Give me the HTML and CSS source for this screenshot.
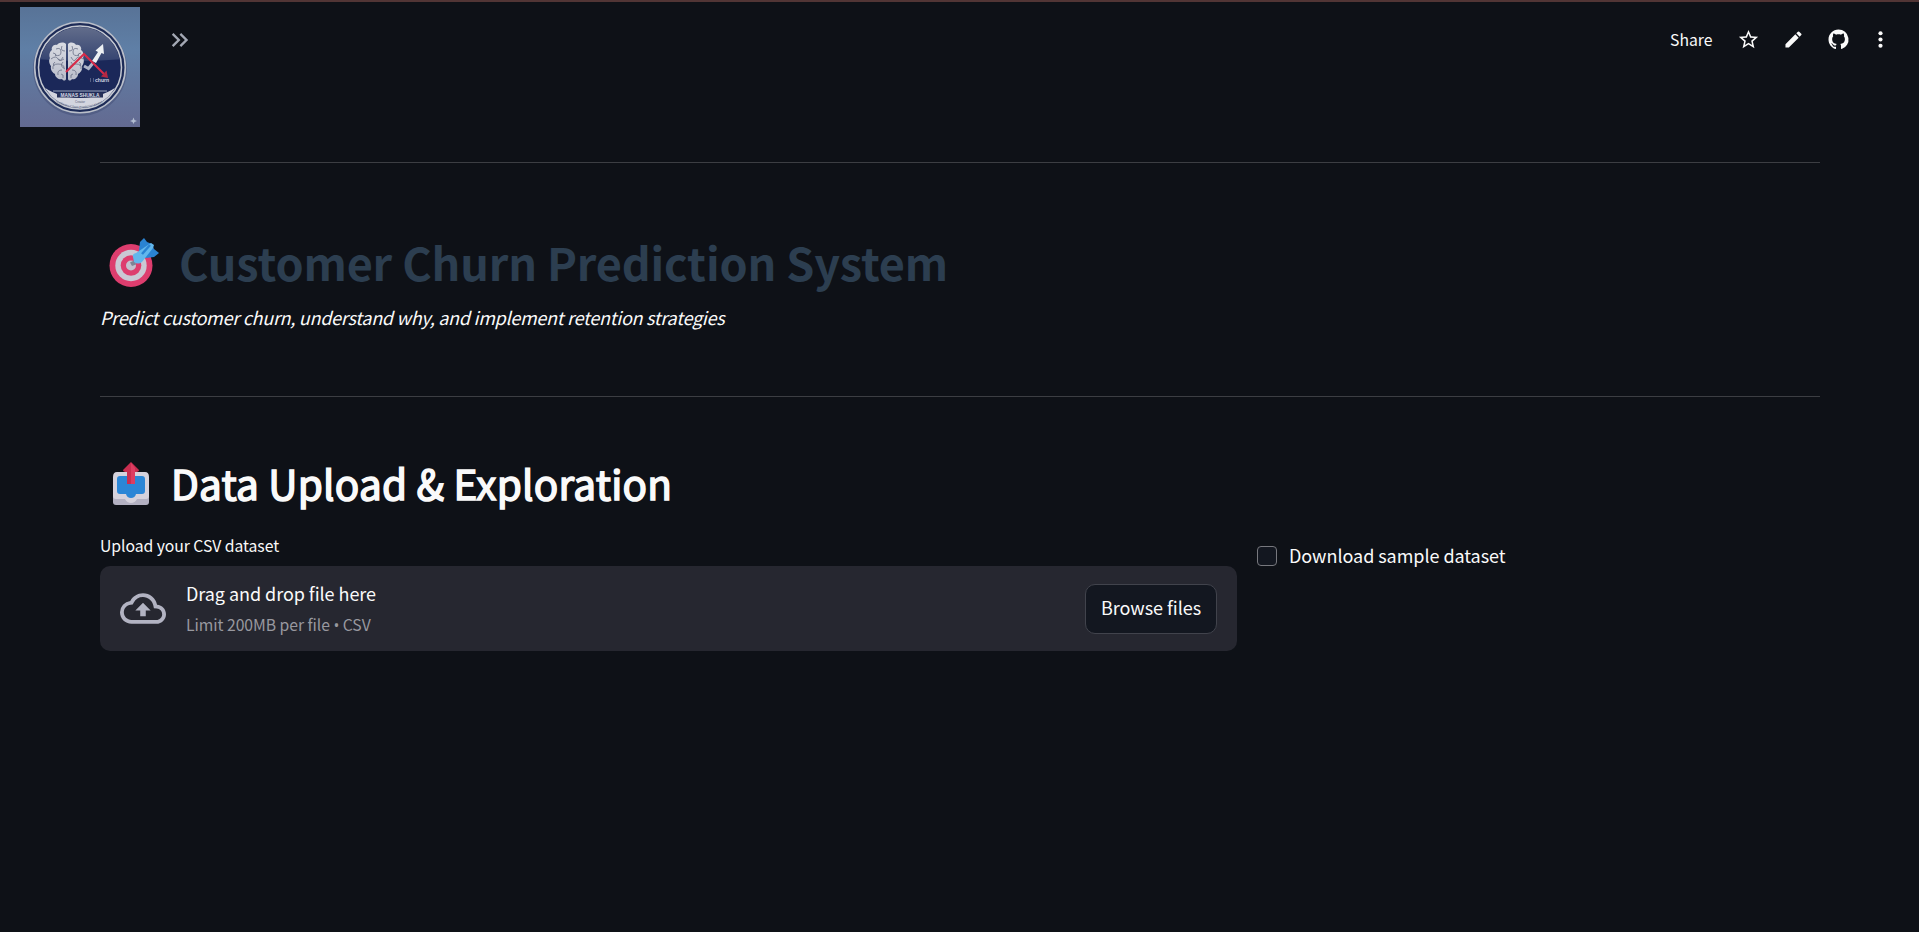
FILE: index.html
```html
<!DOCTYPE html>
<html lang="en">
<head>
<meta charset="utf-8">
<title>Customer Churn Prediction System</title>
<link rel="stylesheet" href="styles.css">
</head>
<body>
<header class="topbar">
  <svg class="logo" viewBox="0 0 120 120" role="img" aria-label="Churn logo">
    <defs>
      <linearGradient id="bg" x1="0" y1="0" x2="0" y2="1"><stop offset="0" stop-color="#587397"/><stop offset=".35" stop-color="#5f7fa6"/><stop offset="1" stop-color="#636a91"/></linearGradient>
      <linearGradient id="gloss" x1="0" y1="0" x2="0" y2="1"><stop offset="0" stop-color="#69738f"/><stop offset="1" stop-color="#354471"/></linearGradient>
      <linearGradient id="brain" x1="0" y1="0" x2="0" y2="1"><stop offset="0" stop-color="#dadce3"/><stop offset="1" stop-color="#b9bdcb"/></linearGradient>
      <clipPath id="disc"><circle cx="60" cy="60.5" r="40.5"/></clipPath>
    </defs>
    <rect width="120" height="120" fill="url(#bg)"/>
    <circle cx="60" cy="62" r="47" fill="#48547b" opacity=".6"/>
    <circle cx="60" cy="60.500" r="45.300" fill="#1d2b57" stroke="#b9bec9" stroke-width="1.600"/>
    <circle cx="60" cy="60.500" r="41.500" fill="#1b2859" stroke="#c3c7d0" stroke-width="1.500"/>
    <g clip-path="url(#disc)">
      <path d="M15 15H105V52Q60 56 15 52Z" fill="url(#gloss)"/>
      <path d="M14 72Q33 91 60 91T106 72V110H14Z" fill="#d3d5df"/>
    </g>
    <g fill="url(#brain)">
      <path d="M46 37c-3-3-8-1-9 1-4-1-6 3-5 5-3 2-3 6-2 8-2 3 0 7 1 8-1 4 2 7 4 8 0 4 5 6 7 5 2 3 4 1 4 0Z"/>
      <path d="M48 37c3-3 7-1 8 1 4-1 6 3 5 5 3 2 3 6 2 8 2 3 0 7-1 8 1 4-2 7-4 8 0 4-4 6-6 5-2 3-4 1-4 0Z"/>
    </g>
    <g fill="none" stroke="#697087" stroke-width=".8">
      <path d="M36 42q5-2 5 3t-6 3M31 52q5-4 7 0t5-2M33 62q-1-5 5-5t6 4M38 68q-1-5 4-5M42 39q-2 5 3 5M43 55q-4 4 2 7M33 46q3 0 3 3M35 55q-3 2-1 4M41 67q3 0 2 4M38 52q3 3 6 0"/>
      <path d="M58 42q-5-2-5 3t6 3M63 52q-5-4-7 0t-5-2M61 62q1-5-5-5t-6 4M56 68q1-5-4-5M52 39q2 5-3 5M51 55q4 4-2 7M61 46q-3 0-3 3M59 55q3 2 1 4M53 67q-3 0-2 4"/>
    </g>
    <path d="M64 59L68.500 61.500L73 56" fill="none" stroke="#aeb5c8" stroke-width="3"/>
    <path d="M72 54L78 45L75.500 43.500L83 37L84 47L81.500 46L76 56Z" fill="#edf0f3"/>
    <path d="M46 65L64 47L84 67" fill="none" stroke="#d82b49" stroke-width="2"/>
    <path d="M88 71L81 69.500L86.500 63.500Z" fill="#b52843"/>
    <text x="75" y="75" class="mark-name" textLength="14" lengthAdjust="spacingAndGlyphs">churn</text>
    <path d="M70 72h1m2 0h1m-4 2h1m2 0h1" stroke="#8d96ae"/>
    <path d="M33 84H87" stroke="#9ba5bd"/>
    <path d="M37 85.500H83V90.500H37Z" fill="#273159"/>
    <text x="60" y="90" class="mark-owner" text-anchor="middle" textLength="39" lengthAdjust="spacingAndGlyphs">MANAS SHUKLA</text>
    <text x="60" y="95.500" class="mark-role" text-anchor="middle">Creator</text>
    <path id="arc" d="M36 95Q60 107 84 95" fill="none"/>
    <text class="mark-role"><textPath href="#arc" textLength="48" lengthAdjust="spacingAndGlyphs">Customer Churn Prediction Model</textPath></text>
    <path d="M113.500 110.500L114.500 113L117 114L114.500 115L113.500 117L112.500 115L110 114L112.500 113Z" fill="#b2bdd1"/>
  </svg>
  <svg class="expand" viewBox="0 0 24 24"><path d="M6.410 6 5 7.410 9.580 12 5 16.590 6.410 18l6-6zM13 6l-1.410 1.410L16.170 12l-4.580 4.590L13 18l6-6z"/></svg>
  <nav class="actions">
    <span class="share">Share</span>
    <svg class="act" viewBox="-1 -1 26 26"><path d="M22 9.240l-7.190-.62L12 2 9.190 8.630 2 9.240l5.460 4.730L5.820 21 12 17.270 18.180 21l-1.630-7.030L22 9.240zM12 15.400l-3.760 2.270 1-4.280-3.320-2.880 4.380-.38L12 6.100l1.710 4.040 4.380.38-3.320 2.880 1 4.280L12 15.400z"/></svg>
    <svg class="act" viewBox="-2 -2 28 28"><path d="M3 17.250V21h3.750L17.810 9.940l-3.750-3.750L3 17.250zM20.710 7.040a1 1 0 0 0 0-1.410l-2.340-2.340a1 1 0 0 0-1.410 0l-1.830 1.830 3.750 3.750 1.830-1.830z"/></svg>
    <svg class="act" viewBox="-2 -2 20 20"><path d="M8 0C3.580 0 0 3.580 0 8c0 3.540 2.290 6.530 5.470 7.590.4.070.55-.17.55-.38 0-.19-.01-.82-.01-1.490-2.010.37-2.530-.49-2.690-.94-.09-.23-.48-.94-.82-1.130-.28-.15-.68-.52-.01-.53.63-.01 1.080.58 1.230.82.72 1.210 1.870.87 2.330.66.070-.52.280-.87.510-1.070-1.780-.2-3.640-.89-3.640-3.950 0-.87.310-1.590.82-2.150-.08-.2-.36-1.020.08-2.120 0 0 .67-.21 2.200.82.640-.18 1.320-.27 2-.27s1.360.09 2 .27c1.530-1.040 2.200-.82 2.200-.82.440 1.100.160 1.920.08 2.120.51.56.82 1.270.82 2.150 0 3.070-1.870 3.750-3.650 3.950.29.25.54.73.54 1.480 0 1.070-.01 1.930-.01 2.200 0 .21.150.46.550.38A8 8 0 0 0 8 0z"/></svg>
    <svg class="act act-more" viewBox="0 0 24 24"><circle cx="12" cy="6" r="2"/><circle cx="12" cy="12" r="2"/><circle cx="12" cy="18" r="2"/></svg>
  </nav>
</header>
<main class="page">
  <hr class="rule">
  <h1 class="title">
    <svg class="target" viewBox="0 0 50 50">
      <circle cx="22" cy="28.500" r="21.500" fill="#dd3d6e"/><circle cx="22" cy="28.500" r="15.700" fill="#cac8d4"/><circle cx="22" cy="28.500" r="10.300" fill="#dd3d6e"/><circle cx="22" cy="28.500" r="5" fill="#c3c1ce"/>
      <path d="M21 25.500L26 23L27 27.500L23 29Z" fill="#7d8495"/>
      <path d="M30 13L31 5L35 1L38 5L43 7L45 12L50 16L45 20L37 21L30 18Z" fill="#2a83d2"/>
      <path d="M24 20Q23 17 27 16L42 6L45 8L44 11L33 25Q29 28 25 25Z" fill="#62b7ed"/>
      <path d="M33 17L41 8" stroke="#2a83d2" stroke-width="2.500"/>
    </svg>
    <span class="title-text">Customer Churn Prediction System</span>
  </h1>
  <p class="tagline">Predict customer churn, understand why, and implement retention strategies</p>
  <hr class="rule">
  <h2 class="section">
    <svg class="outbox" viewBox="0 0 36 43">
      <rect y="26" width="36" height="17" rx="3" fill="#b3b1c2"/>
      <path d="M4 10H32Q36 10 36 15V34Q36 37 33 37H24Q22 41 18 41T12 37H3Q0 37 0 34V15Q0 10 4 10Z" fill="#d5d2dc"/>
      <path d="M7 14H29Q32 14 32 17V29Q32 32 29 32H23Q22 36 18 36T13 32H7Q4 32 4 29V17Q4 14 7 14Z" fill="#2b86d6"/>
      <path d="M18 0L26 8Q26 10 22 10V22H14V10Q10 10 10 8Z" fill="#c92e50"/><path d="M18 1L22 6V22H18Z" fill="#dc3d62"/>
    </svg>
    <span class="section-text">Data Upload &amp; Exploration</span>
  </h2>
  <div class="columns">
    <section class="upload">
      <label class="label">Upload your CSV dataset</label>
      <div class="dropzone">
        <svg class="cloud" viewBox="0 4 24 16"><path d="M19.350 10.040A7.490 7.490 0 0 0 12 4C9.110 4 6.600 5.640 5.350 8.040A5.994 5.994 0 0 0 0 14c0 3.310 2.690 6 6 6h13c2.760 0 5-2.240 5-5 0-2.640-2.050-4.780-4.650-4.960zM19 18H6c-2.210 0-4-1.790-4-4 0-2.050 1.530-3.760 3.560-3.970l1.070-.11.5-.95A5.469 5.469 0 0 1 12 6c2.620 0 4.880 1.860 5.390 4.430l.3 1.500 1.530.11A2.980 2.980 0 0 1 22 15c0 1.650-1.350 3-3 3zM8 13h2.550v3h2.900v-3H16l-4-4z"/></svg>
        <div class="hint"><span class="hint-main">Drag and drop file here</span><span class="hint-sub">Limit 200MB per file <span class="dot">•</span> CSV</span></div>
        <button class="browse">Browse files</button>
      </div>
    </section>
    <label class="sample"><span class="box"></span><span class="sample-text">Download sample dataset</span></label>
  </div>
</main>
</body>
</html>
```
FILE: styles.css
```css
* { box-sizing: border-box; }
body {
  margin: 0;
  height: 932px;
  overflow: hidden;
  background: #0e1117;
  color: #fafafa;
  font-family: "Noto Sans CJK SC", "Open Sans", sans-serif;
  font-size: 18px;
  border-top: 2px solid #513535;
}
.topbar { display: flex; align-items: flex-start; height: 160px; padding: 5px 26px 0 20px; }
.logo { width: 120px; height: 120px; font-family: "Liberation Sans", sans-serif; }
.mark-name { font-size: 5px; font-weight: 700; fill: #d5d9e5; }
.mark-owner { font-size: 5px; font-weight: 700; fill: #d5d9e5; }
.mark-role { font-size: 3px; fill: #545d7a; }
.expand { width: 28px; height: 28px; margin: 19px 0 0 26px; fill: #a3a8b4; }
.actions { display: flex; align-items: center; gap: 20px; height: 50px; margin: 7px 0 0 auto; }
.share { margin-right: 3px; padding-top: 2px; font-size: 15.750px; line-height: 24px; white-space: nowrap; }
.act { width: 25px; height: 25px; fill: #fafafa; }
.act-more { margin-left: -2.500px; }
.page { padding: 0 99px 0 100px; }
.rule { height: 1px; margin: 0; border: 0; background: #3c3e43; }
.title { display: flex; align-items: center; height: 62px; margin: 68px 0 0; gap: 20px; padding-left: 9px; color: #2c3e50; font-size: 45px; line-height: 62px; white-space: nowrap; }
.title-text { padding-bottom: 1px; letter-spacing: -0.150px; }
.target { width: 50px; height: 50px; }
.tagline { height: 30px; margin: 9px 0 64px; font-size: 18px; line-height: 30px; font-style: italic; letter-spacing: -0.270px; white-space: nowrap; }
.section { display: flex; align-items: center; height: 54px; margin: 59px 0 0; padding-left: 13px; gap: 22px; font-size: 40.500px; font-weight: 400; line-height: 54px; white-space: nowrap; }
.section-text { letter-spacing: 0.220px; -webkit-text-stroke: 1.500px #fafafa; }
.outbox { width: 36px; height: 43px; }
.columns { display: grid; grid-template-columns: 1137px 1fr; gap: 20px; margin-top: 22px; }
.label { display: block; height: 34px; font-size: 15.750px; line-height: 28px; letter-spacing: -0.050px; }
.dropzone { display: flex; align-items: center; height: 85px; padding: 0 20px; border-radius: 10px; background: #262730; }
.cloud { width: 46px; height: 31px; fill: #b2b3c2; }
.hint { display: flex; flex-direction: column; gap: 2px; margin-left: 20px; line-height: 29px; white-space: nowrap; }
.hint-main { letter-spacing: -0.050px; }
.hint-sub { color: #98989f; font-size: 15.750px; letter-spacing: -0.050px; }
.dot { font-family: "Open Sans", sans-serif; line-height: 1; }
.browse { width: 132px; height: 50px; margin-left: auto; padding: 0 0 3px; border: 1px solid #41434c; border-radius: 10px; background: #131720; color: inherit; font: inherit; letter-spacing: -0.050px; white-space: nowrap; }
.sample { display: flex; align-items: center; height: 30px; margin-top: 9px; gap: 12px; }
.sample-text { padding-bottom: 2px; letter-spacing: -0.050px; }
.box { width: 20px; height: 20px; border: 1px solid #77787e; border-radius: 4px; background: #131720; }
```
